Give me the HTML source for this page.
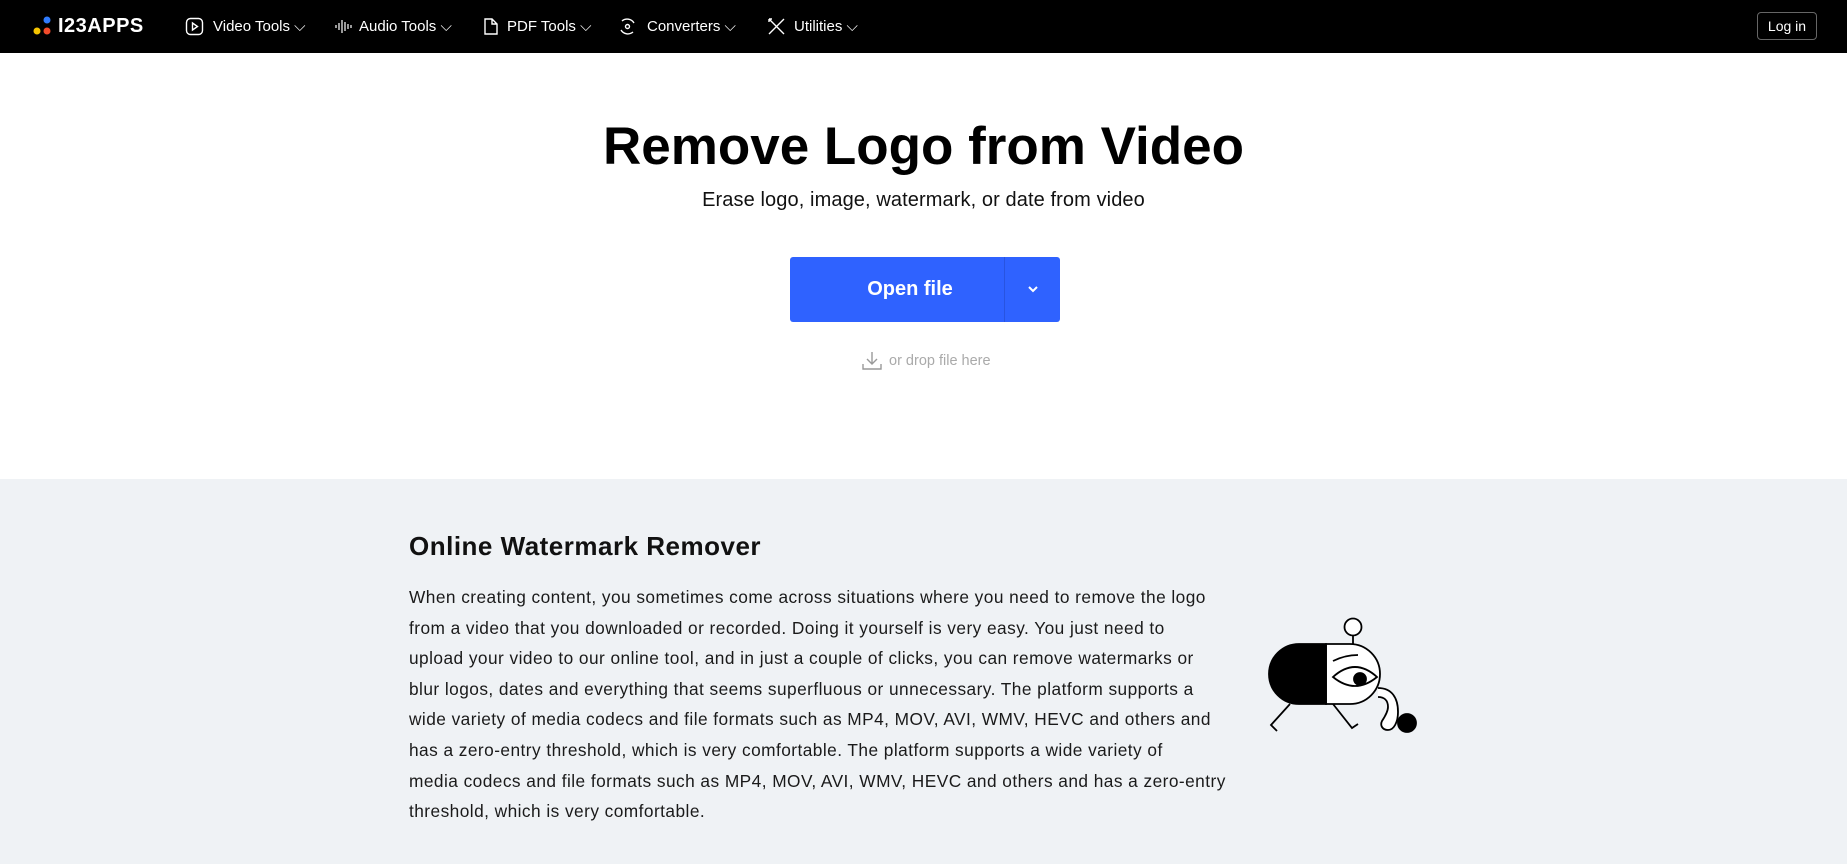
<!DOCTYPE html>
<html><head><meta charset="utf-8"><style>
*{margin:0;padding:0;box-sizing:border-box}
body{width:1847px;height:864px;overflow:hidden;background:#fff;font-family:"Liberation Sans",sans-serif;position:relative}
.nav{position:absolute;left:0;top:0;width:1847px;height:53px;background:#000;color:#fff}
.ni{position:absolute;top:0;height:53px;display:flex;align-items:center;font-size:15px;color:#fff}
.ni svg{position:absolute}
.login{position:absolute;left:1757px;top:12px;width:60px;height:28px;border:1px solid #666;border-radius:4px;color:#fff;font-size:14px;display:flex;align-items:center;justify-content:center}
h1{position:absolute;left:0;width:1847px;top:116px;text-align:center;font-size:53px;font-weight:bold;color:#000}
.sub{position:absolute;left:0;width:1847px;top:189px;text-align:center;font-size:20px;color:#111;letter-spacing:0.1px}
.btn{position:absolute;left:790px;top:257px;width:270px;height:65px;background:#2f62ff;border-radius:3px;color:#fff}
.btn .t{position:absolute;left:0;width:240px;top:0;height:65px;display:flex;align-items:center;justify-content:center;font-size:20px;font-weight:bold}
.btn .sep{position:absolute;left:214px;top:0;width:1px;height:65px;background:#2854e0}
.drop{position:absolute;left:889px;top:353px;font-size:14.5px;color:#aaa}
.gray{position:absolute;left:0;top:479px;width:1847px;height:385px;background:#eff2f5}
h2{position:absolute;left:409px;top:531px;font-size:26px;font-weight:bold;color:#111;letter-spacing:0.5px}
p{position:absolute;left:409px;top:582px;white-space:nowrap;font-size:17.3px;line-height:30.6px;color:#1a1a1a;letter-spacing:0.45px}
</style></head><body>
<div class="nav">
 <svg style="position:absolute;left:33px;top:16px" width="20" height="20" viewBox="0 0 20 20"><circle cx="14" cy="4" r="3.5" fill="#2f7bff"/><circle cx="4" cy="15" r="3.5" fill="#f5c400"/><circle cx="14" cy="15" r="3.5" fill="#f24b2b"/></svg>
 <div class="ni" style="left:58px;font-weight:bold;font-size:20px;letter-spacing:0.5px">I23APPS</div>
 <div class="ni" style="left:185px"><svg style="left:0;top:17px" width="19" height="19" viewBox="0 0 19 19" fill="none" stroke="#fff" stroke-width="1.4"><rect x="1.5" y="1.5" width="16" height="16" rx="4"/><path d="M7.5 6v7l5-3.5z"/></svg><span style="margin-left:28px">Video Tools ⌵</span></div>
 <div class="ni" style="left:335px"><svg style="left:0;top:17px" width="19" height="19" viewBox="0 0 19 19" stroke="#fff" stroke-width="1.2"><path d="M1 8v3M4 6v7M7 3v13M10 5v9M13 7v5M16 8v3"/></svg><span style="margin-left:24px">Audio Tools ⌵</span></div>
 <div class="ni" style="left:483px"><svg style="left:0;top:17px" width="16" height="19" viewBox="0 0 16 19" fill="none" stroke="#fff" stroke-width="1.4"><path d="M2 2h7l5 5v10H2z M9 2v5h5"/></svg><span style="margin-left:24px">PDF Tools ⌵</span></div>
 <div class="ni" style="left:618px"><svg style="left:0;top:17px" width="19" height="19" viewBox="0 0 19 19" fill="none" stroke="#fff" stroke-width="1.4"><path d="M4 4a8 8 0 0 1 12 2M15 15a8 8 0 0 1-12-2"/><circle cx="9.5" cy="9.5" r="2"/></svg><span style="margin-left:29px">Converters ⌵</span></div>
 <div class="ni" style="left:767px"><svg style="left:0;top:17px" width="19" height="19" viewBox="0 0 19 19" fill="none" stroke="#fff" stroke-width="1.4"><path d="M2 2l15 15M17 2L2 17M2 2l3 0M2 2l0 3"/></svg><span style="margin-left:27px">Utilities ⌵</span></div>
 <div class="login">Log in</div>
</div>
<h1>Remove Logo from Video</h1>
<div class="sub">Erase logo, image, watermark, or date from video</div>
<div class="btn"><div class="t">Open file</div><div class="sep"></div><svg style="position:absolute;left:237px;top:28px" width="12" height="9" viewBox="0 0 12 9" fill="none" stroke="#fff" stroke-width="2"><path d="M2 2l4 4 4-4"/></svg></div>
<svg style="position:absolute;left:861px;top:350px" width="22" height="22" viewBox="0 0 22 22" fill="none" stroke="#999" stroke-width="1.4"><path d="M11 2v12M6 9l5 5 5-5M2 14v5h18v-5"/></svg>
<div class="drop">or drop file here</div>
<div class="gray"></div>
<h2>Online Watermark Remover</h2>
<p>When creating content, you sometimes come across situations where you need to remove the logo<br>from a video that you downloaded or recorded. Doing it yourself is very easy. You just need to<br>upload your video to our online tool, and in just a couple of clicks, you can remove watermarks or<br>blur logos, dates and everything that seems superfluous or unnecessary. The platform supports a<br>wide variety of media codecs and file formats such as MP4, MOV, AVI, WMV, HEVC and others and<br>has a zero-entry threshold, which is very comfortable. The platform supports a wide variety of<br>media codecs and file formats such as MP4, MOV, AVI, WMV, HEVC and others and has a zero-entry<br>threshold, which is very comfortable.</p>
<svg style="position:absolute;left:1240px;top:600px" width="200" height="150" viewBox="1240 600 200 150" fill="none" stroke="#000" stroke-width="1.8">
 <path d="M1290 704l-19 21 6 6M1333 704l19 24 6-4"/>
 <path d="M1378 688c14 0 20 10 20 24 0 10-4 18-10 18-6 0-8-5-6-9 4-6 6-10 6-14 0-7-4-10-10-10" fill="#fff"/>
 <circle cx="1407" cy="723" r="9" fill="#000"/>
 <path d="M1326 644h24a30 30 0 0 1 0 60h-24z" fill="#fff"/>
 <path d="M1326 644h-27a30 30 0 0 0 0 60h27z" fill="#000"/>
 <path d="M1353 636v8"/><circle cx="1353" cy="627" r="8.5" fill="#fff"/>
 <path d="M1333 661q12-6 25-6"/>
 <path d="M1333 677q22-20 44 0q-22 18-44 0z" fill="#fff"/>
 <circle cx="1360" cy="679" r="6" fill="#000"/>
</svg>
</body></html>
